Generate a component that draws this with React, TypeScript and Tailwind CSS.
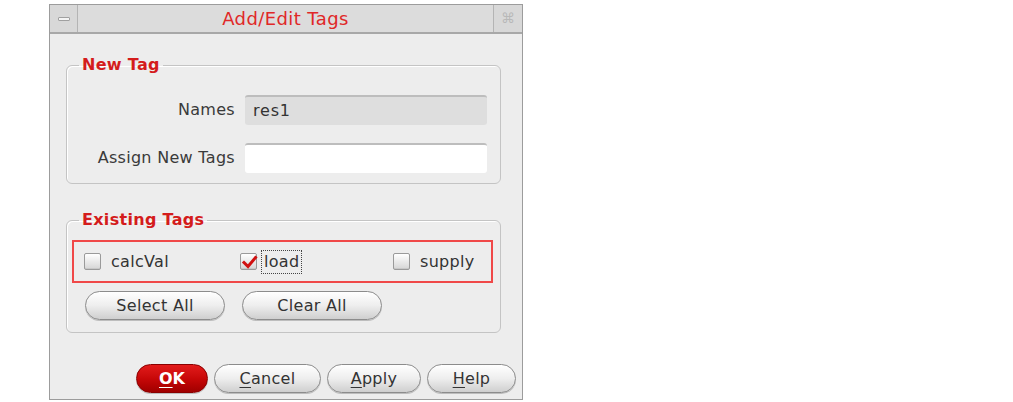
import React from "react";

const font = { fontFamily: '"DejaVu Sans", "Liberation Sans", sans-serif' };

function Check({ checked }: { checked?: boolean }) {
  return (
    <span className="relative inline-block w-[17px] h-[17px] rounded-[2px] border border-[#9a9a9a] bg-gradient-to-b from-[#ffffff] to-[#d6d6d6] shadow-[inset_0_-1px_0_#c8c8c8]">
      {checked && (
        <svg viewBox="0 0 17 17" className="absolute left-0 top-0 w-[17px] h-[17px]">
          <path d="M3 8.5 L7 12.5 L14.5 3.5" fill="none" stroke="#d01010" strokeWidth="3" strokeLinecap="square" />
        </svg>
      )}
    </span>
  );
}

function Btn({ children, w }: { children: React.ReactNode; w: string }) {
  return (
    <div
      className={`${w} h-[29px] rounded-full border border-[#8c8c8c] bg-gradient-to-b from-[#ffffff] via-[#eeeeee] to-[#cfcfcf] flex items-center justify-center text-[16px] tracking-[0.3px] text-[#333] shadow-[0_1px_0_#bdbdbd]`}
    >
      {children}
    </div>
  );
}

export default function App() {
  return (
    <div className="w-[1013px] h-[402px] bg-white overflow-hidden" style={font}>
      <div className="ml-[49px] mt-[4px] w-[474px] h-[396px] border border-[#9c9c9c] bg-[#ededed] flex flex-col">
        {/* Title bar */}
        <div className="h-[29px] flex bg-[#dcdcdc] border-b-2 border-[#a8a8a8]">
          <div className="w-[28px] flex items-center justify-center border-r border-[#b4b4b4] bg-[#d8d8d8]">
            <span className="block w-[12px] h-[4px] rounded-[1px] bg-[#f4f4f4] border border-[#a0a0a0]" />
          </div>
          <div className="flex-1 flex items-center justify-center text-[18px] tracking-[0.4px] text-[#e02828]">Add/Edit Tags</div>
          <div className="w-[29px] flex items-center justify-center border-l border-[#b4b4b4] bg-[#d8d8d8] text-[14px] text-[#b8b8b8]">
            ⌘
          </div>
        </div>

        {/* Body */}
        <div className="flex-1 flex flex-col pl-[16px] pr-[21px] pt-[22px]">
          <fieldset className="border border-[#c4c4c4] rounded-[6px] pl-[14px] pr-[13px] pt-[21px] pb-[10px] shadow-[inset_1px_1px_0_#ffffff]">
            <legend className="ml-[-2px] px-[3px] text-[16px] tracking-[0.3px] font-bold text-[#d41c1c] leading-[18px]">New Tag</legend>
            <div className="grid grid-cols-[154px_1fr] gap-x-[10px] gap-y-[18px] items-center">
              <div className="text-right text-[16px] tracking-[0.3px] text-[#3a3a3a]">Names</div>
              <div className="h-[30px] rounded-[3px] bg-[#dedede] border-t-2 border-[#bdbdbd] flex items-center pl-[8px] text-[16px] text-[#333] tracking-[0.8px]">
                res1
              </div>
              <div className="text-right text-[16px] tracking-[0.3px] text-[#3a3a3a] whitespace-nowrap">Assign New Tags</div>
              <div className="h-[30px] rounded-[3px] bg-white border-t-2 border-[#bdbdbd]" />
            </div>
          </fieldset>

          <fieldset className="mt-[27px] border border-[#c4c4c4] rounded-[6px] pl-[5px] pr-[7px] pt-[11px] pb-[12px] shadow-[inset_1px_1px_0_#ffffff]">
            <legend className="ml-[7px] px-[3px] text-[16px] tracking-[0.3px] font-bold text-[#d41c1c] leading-[18px]">Existing Tags</legend>
            <div className="h-[43px] border-2 border-[#f04848] flex items-center pl-[10px] text-[16px] tracking-[0.3px] text-[#333]">
              <div className="w-[156px] flex items-center gap-[10px]">
                <Check />
                <span>calcVal</span>
              </div>
              <div className="w-[153px] flex items-center gap-[4px]">
                <Check checked />
                <span className="border border-dotted border-[#444] px-[2px] leading-[22px]">load</span>
              </div>
              <div className="flex items-center gap-[10px]">
                <Check />
                <span>supply</span>
              </div>
            </div>
            <div className="flex gap-[17px] pl-[13px] mt-[8px]">
              <Btn w="w-[140px]">Select All</Btn>
              <Btn w="w-[140px]">Clear All</Btn>
            </div>
          </fieldset>

          <div className="flex justify-end gap-[6px] mt-[31px] mr-[-15px]">
            <div className="w-[72px] h-[29px] rounded-full border border-[#8a0000] bg-gradient-to-b from-[#e21a1a] via-[#c80808] to-[#a00000] flex items-center justify-center text-[16px] font-bold text-white shadow-[0_1px_0_#bdbdbd]">
              <span>
                <span className="underline underline-offset-[3px]">O</span>K
              </span>
            </div>
            <Btn w="w-[107px]">
              <span>
                <span className="underline underline-offset-[3px]">C</span>ancel
              </span>
            </Btn>
            <Btn w="w-[94px]">
              <span>
                <span className="underline underline-offset-[3px]">A</span>pply
              </span>
            </Btn>
            <Btn w="w-[89px]">
              <span>
                <span className="underline underline-offset-[3px]">H</span>elp
              </span>
            </Btn>
          </div>
        </div>
      </div>
    </div>
  );
}
